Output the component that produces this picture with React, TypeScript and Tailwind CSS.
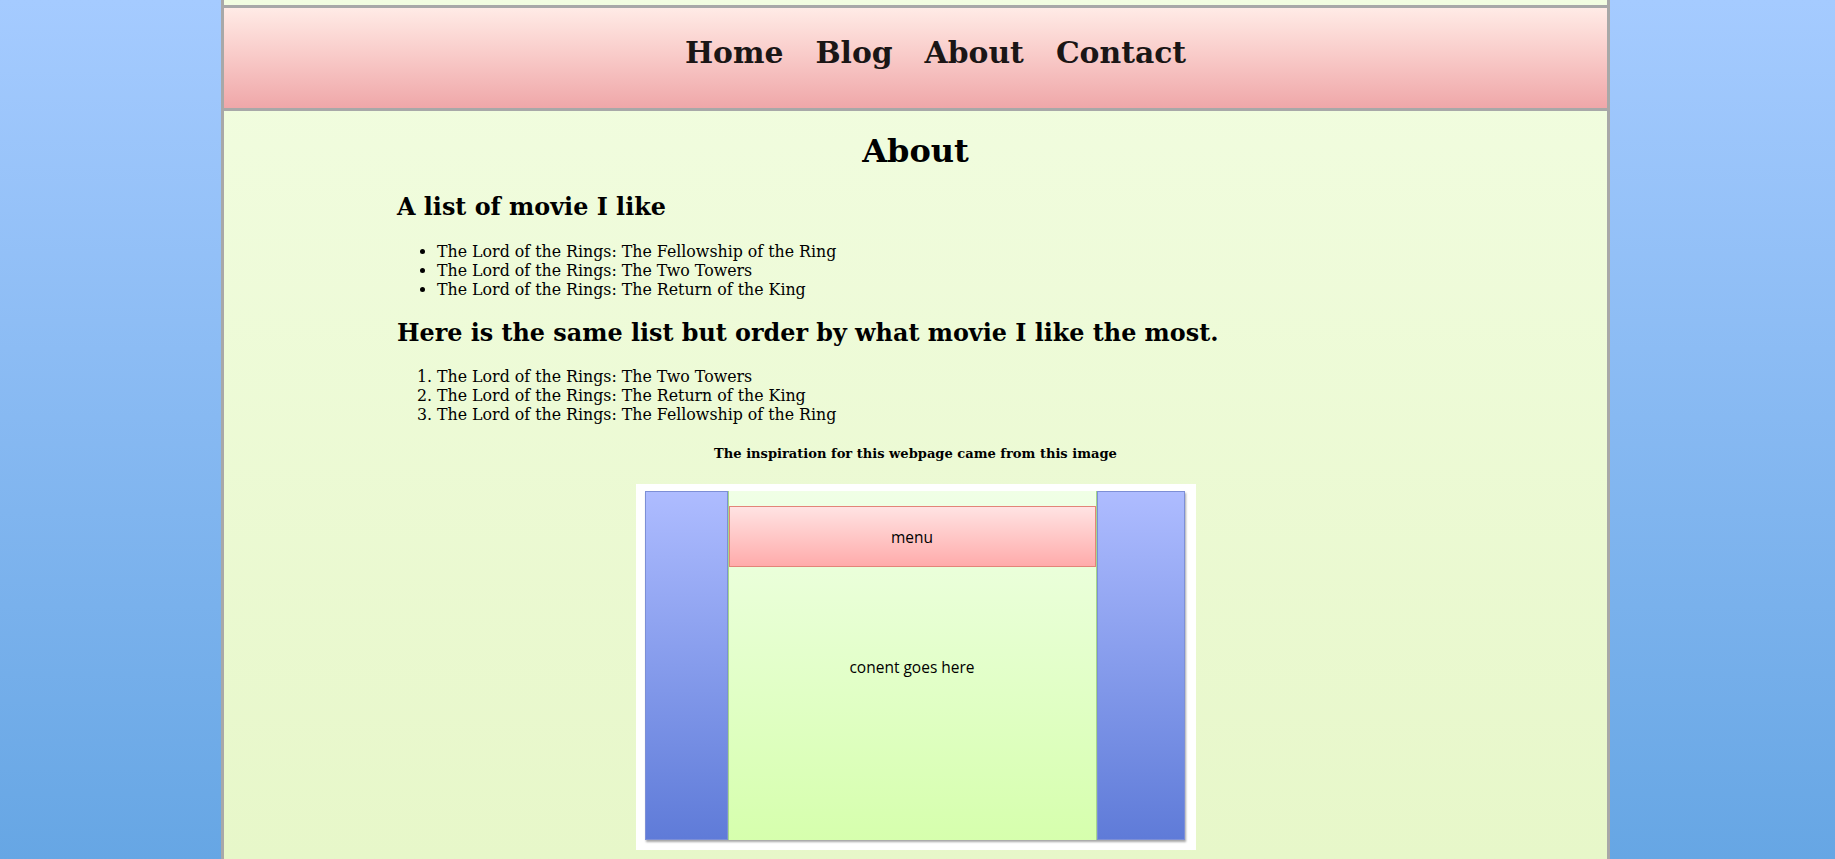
const serif = "font-['DejaVu_Serif','Liberation_Serif',serif]";

const likedMovies = [
  "The Lord of the Rings: The Fellowship of the Ring",
  "The Lord of the Rings: The Two Towers",
  "The Lord of the Rings: The Return of the King",
];

const rankedMovies = [
  "The Lord of the Rings: The Two Towers",
  "The Lord of the Rings: The Return of the King",
  "The Lord of the Rings: The Fellowship of the Ring",
];

const navLinks = ["Home", "Blog", "About", "Contact"];

function Mockup() {
  return (
    <div className="mx-auto mt-[22px] w-[560px] bg-white pb-[10px] pl-[9px] pr-[11px] pt-[7px]">
      <div className="flex h-[349px] font-['Open_Sans',sans-serif] text-[15.5px] text-black shadow-[1px_2px_2px_rgba(0,0,0,0.35)]">
        <div className="w-[83px] border border-[#7d8fd6] bg-gradient-to-b from-[#aebcff] to-[#5f7bd8]" />
        <div className="flex w-[369px] flex-col border-x border-[#a5d68c] bg-gradient-to-b from-[#f0ffe6] to-[#d6ffad] pt-[15px]">
          <div className="flex h-[61px] items-center justify-center border border-[#e38479] bg-gradient-to-b from-[#ffe3e3] to-[#ffabab] pt-[3px]">
            menu
          </div>
          <div className="pt-[90px] text-center leading-[20px]">conent goes here</div>
        </div>
        <div className="w-[88px] border border-[#7d8fd6] bg-gradient-to-b from-[#aebcff] to-[#5f7bd8]" />
      </div>
    </div>
  );
}

export default function App() {
  return (
    <div className={`min-h-screen bg-gradient-to-b from-[#a5cbff] to-[#66a6e4] ${serif} text-black`}>
      <div className="ml-[221px] min-h-screen w-[1389px] border-x-[3px] border-[#a8a8a8] bg-gradient-to-b from-[#f2fde1] to-[#e7f7c9] pt-[5px]">
        <nav className="h-[106px] border-y-[3px] border-[#a8a8a8] bg-gradient-to-b from-[#ffebe6] to-[#efa7a9] pt-[27px]">
          <ul className="flex justify-center gap-[32px] pl-[40px] text-[29.8px] font-bold leading-[35px] text-[#1a1616]">
            {navLinks.map((link) => (
              <li key={link}>
                <a href="#">{link}</a>
              </li>
            ))}
          </ul>
        </nav>

        <main className="px-[173px] pb-[10px]">
          <h1 className="mt-[22px] text-center text-[32px] font-bold leading-[37px]">About</h1>

          <h2 className="mt-[23px] text-[23.85px] font-bold leading-[28px]">A list of movie I like</h2>
          <ul className="mt-[21px] list-disc pl-[40px] text-[15.8px] leading-[19px]">
            {likedMovies.map((movie) => (
              <li key={movie}>{movie}</li>
            ))}
          </ul>

          <h2 className="mt-[20px] text-[23.85px] font-bold leading-[28px]">
            Here is the same list but order by what movie I like the most.
          </h2>
          <ol className="mt-[20px] list-decimal pl-[40px] text-[15.8px] leading-[19px]">
            {rankedMovies.map((movie) => (
              <li key={movie}>{movie}</li>
            ))}
          </ol>

          <h5 className="mt-[22px] text-center text-[13.05px] font-bold leading-[16px]">
            The inspiration for this webpage came from this image
          </h5>
          <Mockup />
        </main>
      </div>
    </div>
  );
}
